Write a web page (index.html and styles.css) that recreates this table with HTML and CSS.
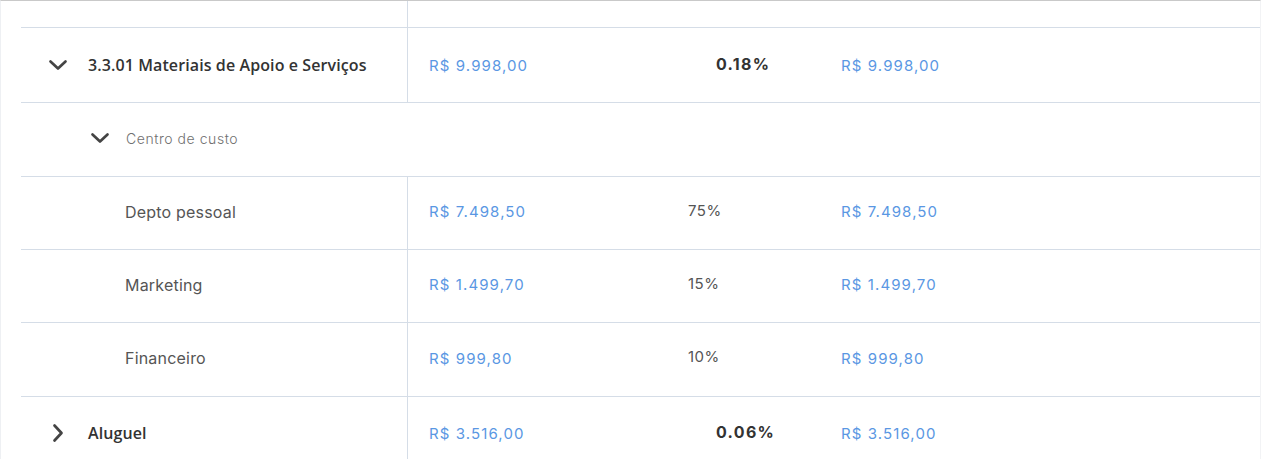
FILE: index.html
```html
<!DOCTYPE html>
<html lang="pt-BR">
<head>
<meta charset="utf-8">
<title>Centro de custo</title>
<link rel="stylesheet" href="styles.css">
</head>
<body>
<div class="table">
  <div class="row row-top">
    <div class="cell cell-label"></div>
    <div class="cell"></div>
  </div>

  <div class="row row-main">
    <div class="cell cell-label">
      <svg class="chev chev-main" viewBox="0 0 20 12" aria-hidden="true"><path d="M2.5 2.5 L10 9.5 L17.5 2.5"/></svg>
      <span class="title">3.3.01 Materiais de Apoio e Serviços</span>
    </div>
    <div class="cell cell-amount">R$ 9.998,00</div>
    <div class="cell cell-pct pct-bold">0.18%</div>
    <div class="cell cell-amount cell-amount-end">R$ 9.998,00</div>
  </div>

  <div class="row row-group">
    <div class="cell cell-group">
      <svg class="chev chev-group" viewBox="0 0 20 12" aria-hidden="true"><path d="M2.5 2.5 L10 9.5 L17.5 2.5"/></svg>
      <span class="group">Centro de custo</span>
    </div>
  </div>

  <div class="row row-sub">
    <div class="cell cell-label cell-sublabel">Depto pessoal</div>
    <div class="cell cell-amount">R$ 7.498,50</div>
    <div class="cell cell-pct">75%</div>
    <div class="cell cell-amount cell-amount-end">R$ 7.498,50</div>
  </div>

  <div class="row row-sub">
    <div class="cell cell-label cell-sublabel">Marketing</div>
    <div class="cell cell-amount">R$ 1.499,70</div>
    <div class="cell cell-pct">15%</div>
    <div class="cell cell-amount cell-amount-end">R$ 1.499,70</div>
  </div>

  <div class="row row-sub row-sub-last">
    <div class="cell cell-label cell-sublabel">Financeiro</div>
    <div class="cell cell-amount">R$ 999,80</div>
    <div class="cell cell-pct">10%</div>
    <div class="cell cell-amount cell-amount-end">R$ 999,80</div>
  </div>

  <div class="row row-main row-last">
    <div class="cell cell-label">
      <svg class="chev chev-right" viewBox="0 0 12 20" aria-hidden="true"><path d="M2.5 2.5 L9.5 10 L2.5 17.5"/></svg>
      <span class="title">Aluguel</span>
    </div>
    <div class="cell cell-amount">R$ 3.516,00</div>
    <div class="cell cell-pct pct-bold">0.06%</div>
    <div class="cell cell-amount cell-amount-end">R$ 3.516,00</div>
  </div>
</div>
</body>
</html>
```

FILE: styles.css
```css
* { box-sizing: border-box; }

html, body {
  margin: 0;
  padding: 0;
  background: #ffffff;
  height: 100%;
  overflow: hidden;
}

body {
  font-family: "Inter", "Noto Sans", sans-serif;
  color: #333;
}

.table {
  border-top: 1px solid #c9c9c9;
  border-left: 1px solid #eef0f3;
  border-right: 1px solid #f2f3f5;
  height: 100%;
  padding-left: 20px;
}

.row {
  display: grid;
  grid-template-columns: 387px 280px 153px 1fr;
  border-bottom: 1px solid #d5dde7;
}

.row-top { height: 27px; }
.row-main { height: 75px; }
.row-group { height: 74px; grid-template-columns: 1fr; }
.row-sub { height: 73px; }
.row-sub-last { height: 74px; }
.row-last { height: 72px; border-bottom: none; }

.cell {
  display: flex;
  align-items: center;
  min-width: 0;
}

.row-sub .cell { padding-bottom: 3px; }
.row-sub .cell-pct { padding-bottom: 6px; }

.cell-label {
  border-right: 1px solid #d5dde7;
  padding-left: 27px;
}

.cell-sublabel {
  padding-left: 104px;
  font-size: 16px;
  color: #555;
  letter-spacing: 0.2px;
}

.cell-group {
  padding-left: 69px;
  padding-bottom: 3px;
}

.chev {
  fill: none;
  stroke: #444;
  stroke-width: 2.7;
  stroke-linecap: round;
  stroke-linejoin: round;
  flex: none;
}

.chev-main { width: 20px; height: 12px; margin-right: 20px; }
.chev-group { width: 20px; height: 12px; margin-right: 16px; }
.chev-right { width: 12px; height: 20px; margin-left: 4px; margin-right: 24px; }

.title {
  font-family: "Open Sans", "Noto Sans", sans-serif;
  font-weight: 600;
  font-size: 16px;
  color: #333;
  letter-spacing: 0.1px;
  padding-bottom: 1px;
}

.group {
  font-size: 14px;
  font-weight: 300;
  color: #707070;
  letter-spacing: 0.55px;
}

.cell-amount {
  padding-left: 21px;
  font-size: 15px;
  color: #5a97e3;
  letter-spacing: 1.1px;
}

.cell-amount-end { padding-left: 0; }

.cell-pct {
  font-size: 15px;
  color: #555;
  letter-spacing: 0.5px;
  padding-bottom: 3px;
}

.pct-bold {
  padding-left: 28px;
  font-size: 16px;
  font-weight: 700;
  color: #333;
  letter-spacing: 1.3px;
}
```
